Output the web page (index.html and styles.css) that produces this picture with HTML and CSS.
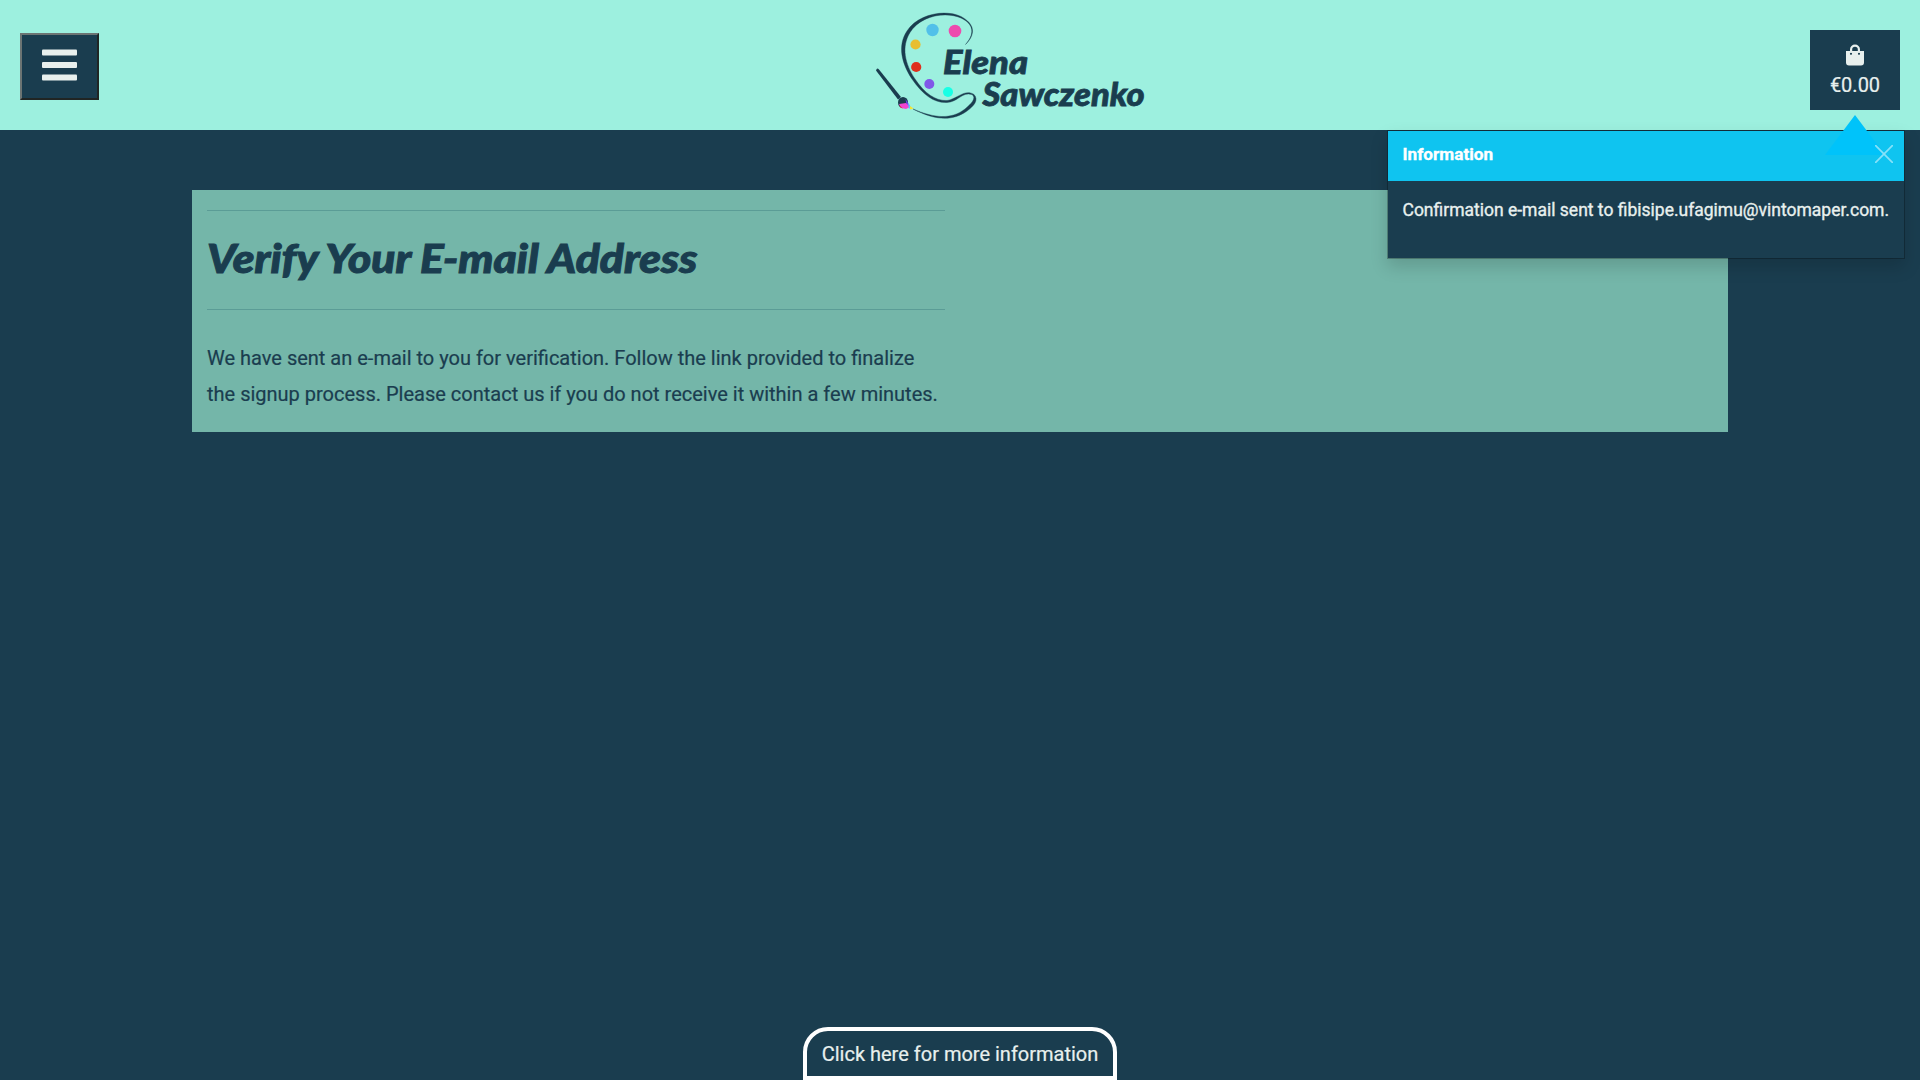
FILE: index.html
```html
<!DOCTYPE html>
<html lang="en">
<head>
<meta charset="utf-8">
<title>Verify Your E-mail Address</title>
<link rel="stylesheet" href="styles.css">
</head>
<body>
<header class="site-header">
  <button class="menu-button" aria-label="Menu">
    <svg width="35" height="32" viewBox="0 0 35 32" fill="currentColor"><rect y="0.4" width="35" height="6" rx="1"/><rect y="13" width="35" height="6" rx="1"/><rect y="25.4" width="35" height="6" rx="1"/></svg>
  </button>
  <a class="logo">
    <svg width="300" height="130" viewBox="0 0 300 130">
      <path class="ink palette" d="M105.500 44.500C116 34 115 24 101 16.500C85 9 58 14 47 31C37 46 42 64 52 79C63 95 74 103 87 102.500C98 102 102 91.500 112 94.500C117 98 111 104 105 109C91 120 74 118 53 109C76 121 93 121 107 111C114 106 119 100 114 94.500C105 88.500 97 99 87 100.500C76 101 65 94 55 79C45 64 41 47 50 32.500C60 16 85 11 101 18C114 24 115 34 105.500 44.500Z"/>
      <path class="ink" d="M16 70.500Q17 67 19 69.500L41 97L38 99.500Z"/>
      <ellipse class="ink" cx="43" cy="102.500" rx="5" ry="5.500"/>
      <path d="M45.500 99L50 106L47 107Z" fill="#6840f0"/>
      <path d="M39 104L46 103L50 107L46 109L41 108Z" fill="#f145d2"/>
      <path d="M39 105L43 108.500L40.500 107.500Z" fill="#e12b28"/>
      <path d="M48 103L51 107L49 109Z" fill="#52caff"/>
      <path d="M50 106L53.500 108.500L50 109.500Z" fill="#f5e533"/>
      <circle cx="72.500" cy="30" r="6.200" fill="#52c0e9"/>
      <circle cx="95" cy="31" r="6.300" fill="#ed4bae"/>
      <circle cx="55.500" cy="44.500" r="5.100" fill="#e8be31"/>
      <circle cx="56.200" cy="67" r="5.100" fill="#df2f1d"/>
      <circle cx="69.300" cy="84" r="5" fill="#8058e8"/>
      <circle cx="88" cy="92" r="5" fill="#18ffe5"/>
      <text class="logo-text" x="83" y="73.500" textLength="85" lengthAdjust="spacingAndGlyphs">Elena</text>
      <text class="logo-text" x="122.500" y="105.500" textLength="162" lengthAdjust="spacingAndGlyphs">Sawczenko</text>
    </svg>
  </a>
  <div class="cart-area">
    <a class="cart">
      <svg width="18" height="22" viewBox="0 0 18 22"><path fill="currentColor" fill-rule="evenodd" d="M0 7h4V5.500a5 5 0 0 1 10 0V7h4v11.500a3 3 0 0 1-3 3H3a3 3 0 0 1-3-3ZM6.200 7h5.600V5.500a2.800 2.800 0 0 0-5.600 0ZM5 8.700a1 1 0 1 0 .01 0ZM13 8.700a1 1 0 1 0 .01 0Z"/></svg>
      <span>€0.00</span>
    </a>
    <div class="toast">
      <div class="toast-head"><strong>Information</strong></div>
      <div class="toast-body">Confirmation e-mail sent to fibisipe.ufagimu@vintomaper.com.</div>
      <svg class="toast-arrow" width="60" height="40" viewBox="0 0 60 40"><path d="M30 0L60 40H0Z" fill="#00c3fa"/></svg>
      <svg class="toast-close" width="18" height="18" viewBox="0 0 18 18"><path d="M.7.7l16.600 16.600M17.300.7L.7 17.300" stroke="currentColor" stroke-width="1.700" stroke-linecap="round"/></svg>
    </div>
  </div>
</header>
<main class="panel">
  <div class="column">
    <hr>
    <h1><span>Verify Your E-mail Address</span></h1>
    <hr>
    <p>We have sent an e-mail to you for verification. Follow the link provided to finalize the signup process. Please contact us if you do not receive it within a few minutes.</p>
  </div>
</main>
<footer class="footer"><a class="footer-tab">Click here for more information</a></footer>
</body>
</html>
```
FILE: styles.css
```css
* { box-sizing: border-box; }

body {
  margin: 0;
  height: 1080px;
  display: flex;
  flex-direction: column;
  overflow: hidden;
  background: #1a3d4f;
  color: #1a3d4f;
  font: 20px/36px Roboto, sans-serif;
  -webkit-text-stroke: .2px;
}

.site-header {
  height: 130px;
  flex: none;
  display: grid;
  grid-template-columns: 1fr 300px 1fr;
  align-items: center;
  padding: 0 20px;
  background: #9df0df;
}

.menu-button {
  width: 79px;
  height: 67px;
  margin-top: 3px;
  padding: 0;
  display: flex;
  align-items: center;
  justify-content: center;
  border: 2px solid;
  border-color: #6c7473 #202524 #202524 #6c7473;
  background: #1a3d4f;
  color: #e8f0ee;
}
.menu-button svg { margin-top: -4px; }

.logo { position: relative; left: 50px; height: 130px; }
.ink { fill: #1a3d4f; }
.palette { stroke: #1a3d4f; stroke-width: .4px; }
.logo-text {
  fill: #1a3d4f;
  stroke: #1a3d4f;
  stroke-width: .8px;
  font: italic 900 32.500px Lato, sans-serif;
}

.cart-area { position: relative; justify-self: end; margin-top: 10px; }
.cart {
  width: 90px;
  height: 80px;
  padding-top: 14px;
  display: flex;
  flex-direction: column;
  align-items: center;
  background: #1a3d4f;
  color: #e8f0ee;
}
.cart span { line-height: 38px; }

.toast {
  position: absolute;
  top: 100px;
  right: -5px;
  width: 518px;
  height: 129px;
  border: 1px solid rgba(0, 0, 0, .25);
  background: #1a3d4f;
  background-clip: padding-box;
  box-shadow: 0 8px 16px rgba(0, 0, 0, .15);
  color: #e8f0ee;
  font-size: 17.500px;
  -webkit-text-stroke: .35px;
}
.toast-head {
  height: 50px;
  padding: 5px 14.500px;
  background: #0fc4f0;
  color: #fff;
  font-size: 17.200px;
  line-height: 36px;
}
.toast-body { padding: 11px 14.500px; white-space: nowrap; }
.toast-arrow { position: absolute; top: -16px; right: 19px; }
.toast-close { position: absolute; top: 14px; right: 11px; color: #87e1f8; }

.panel {
  width: 1536px;
  height: 242px;
  margin: 60px auto 0;
  padding: 20px 15px 0;
  background: #74b6a9;
}
.column { width: 738px; }
.column hr { height: 1px; margin: 0; border: 0; background: #5b9c96; }
.column h1 {
  height: 98px;
  margin: 0;
  font: italic 900 39px/95px Lato, sans-serif;
  -webkit-text-stroke: 1px;
  white-space: nowrap;
}
.column h1 span {
  display: inline-block;
  transform: scaleX(1.137);
  transform-origin: left;
}
.column p { margin: 30px 0 0; }

.footer { margin-top: auto; display: flex; justify-content: center; }
.footer-tab {
  height: 53px;
  padding: 5px 15px 0;
  border: 4px solid #fff;
  border-radius: 25px 25px 0 0;
  color: #e8f0ee;
  line-height: 37px;
}
```
